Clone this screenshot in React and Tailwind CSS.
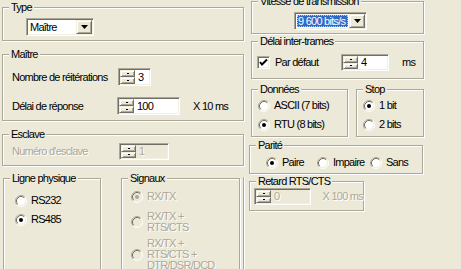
import React from 'react'

const sunken =
  'border border-t-[#ACA899] border-l-[#ACA899] border-b-white border-r-white shadow-[inset_1px_1px_0_#716F64,inset_-1px_-1px_0_#F1EFE2]'
const raised =
  'border border-t-[#F1EFE2] border-l-[#F1EFE2] border-b-[#716F64] border-r-[#716F64] shadow-[inset_1px_1px_0_#fff,inset_-1px_-1px_0_#ACA899] bg-[#ECE9D8]'
const grayText = 'text-[#ACA899] [text-shadow:1px_1px_0_#fff]'

function Group({ label, className = '', children }) {
  return (
    <div className={`relative border border-[#ACA899] shadow-[inset_1px_1px_0_#fff,1px_1px_0_#fff] shrink-0 ${className}`}>
      <span className="absolute left-[6px] -top-[7px] bg-[#ECE9D8] px-[2px] leading-[13px] whitespace-nowrap">
        {label}
      </span>
      {children}
    </div>
  )
}

function Combo({ value, className = '', selected }) {
  return (
    <div className={`flex p-[1px] bg-white ${sunken} ${className}`}>
      <div className="flex flex-1 items-center pl-[1px]">
        {selected ? (
          <span className="bg-[#316AC5] text-white outline outline-1 outline-dotted outline-[#E8C860] -outline-offset-1 pl-[1px] pr-[3px] leading-[12px]">
            {value}
          </span>
        ) : (
          <span className="pl-[1px]">{value}</span>
        )}
      </div>
      <div className={`flex w-[16px] items-center justify-center ${raised}`}>
        <svg width="7" height="4" viewBox="0 0 7 4">
          <path d="M0 0h7L3.5 4z" fill="#000" />
        </svg>
      </div>
    </div>
  )
}

function SpinBtn() {
  return (
    <div className={`flex flex-1 items-center justify-center ${raised}`}>
      <span className="h-[1px] w-[2px] bg-black" />
    </div>
  )
}

function Spin({ value, className = '', disabled }) {
  return (
    <div className={`flex p-[1px] ${disabled ? 'bg-[#ECE9D8]' : 'bg-white'} ${sunken} ${className}`}>
      <div className="flex w-[15px] flex-col">
        <SpinBtn />
        <SpinBtn />
      </div>
      <span className={`flex items-center pl-[3px] ${disabled ? grayText : ''}`}>{value}</span>
    </div>
  )
}

function Radio({ checked, disabled }) {
  return (
    <svg width="12" height="12" viewBox="0 0 12 12" className="shrink-0">
      <circle cx="6" cy="6" r="4.5" fill={disabled ? '#ECE9D8' : '#fff'} />
      <path d="M2.11 9.89A5.5 5.5 0 0 1 9.89 2.11" stroke="#ACA899" fill="none" />
      <path d="M9.89 2.11A5.5 5.5 0 0 1 2.11 9.89" stroke="#fff" fill="none" />
      <path d="M2.82 9.18A4.5 4.5 0 0 1 9.18 2.82" stroke="#716F64" fill="none" />
      <path d="M9.18 2.82A4.5 4.5 0 0 1 2.82 9.18" stroke="#F1EFE2" fill="none" />
      {checked && <circle cx="6" cy="6" r="2" fill={disabled ? '#ACA899' : '#000'} />}
    </svg>
  )
}

function Option({ label, checked, disabled, className = '' }) {
  return (
    <div className={`flex items-center gap-[4px] ${className}`}>
      <Radio checked={checked} disabled={disabled} />
      <span className={`whitespace-nowrap ${disabled ? grayText : ''}`}>{label}</span>
    </div>
  )
}

export default function App() {
  return (
    <div className="flex h-[269px] w-[461px] items-start overflow-hidden bg-[#ECE9D8] font-['Liberation_Sans',Arial,sans-serif] text-[11px] leading-[13px] tracking-[-0.75px] text-black">
      {/* left column */}
      <div className="ml-[2px] flex w-[242px] shrink-0 flex-col">
        <Group label="Type" className="mt-[7px] h-[34px] pl-[23px] pt-[10px]">
          <Combo value="Maître" className="h-[18px] w-[68px]" />
        </Group>

        <Group label="Maître" className="mt-[13px] h-[67px] pl-[9px] pt-[13px]">
          <div className="flex items-center">
            <span className="w-[106px]">Nombre de réitérations</span>
            <Spin value="3" className="h-[18px] w-[33px]" />
          </div>
          <div className="mt-[11px] flex items-center">
            <span className="w-[105px]">Délai de réponse</span>
            <Spin value="100" className="h-[18px] w-[63px]" />
            <span className="ml-[13px]">X 10 ms</span>
          </div>
        </Group>

        <Group label="Esclave" className="mt-[13px] h-[32px] pl-[9px] pt-[8px]">
          <div className="flex items-center">
            <span className={`w-[107px] ${grayText}`}>Numéro d'esclave</span>
            <Spin value="1" disabled className="h-[17px] w-[50px]" />
          </div>
        </Group>

        <div className="mt-[12px] flex h-[120px]">
          <Group label="Ligne physique" className="ml-[1px] h-[120px] w-[98px] pl-[11px] pt-[15px]">
            <Option label="RS232" className="h-[13px]" />
            <Option label="RS485" checked className="mt-[6px] h-[13px]" />
          </Group>
          <Group label="Signaux" className="ml-[20px] h-[120px] w-[119px] pl-[9px] pt-[11px]">
            <Option label="RX/TX" checked disabled className="h-[13px]" />
            <Option
              label={<span className="block leading-[11px]">RX/TX +<br />RTS/CTS</span>}
              disabled
              className="mt-[8px]"
            />
            <Option
              label={<span className="block leading-[11px]">RX/TX +<br />RTS/CTS +<br />DTR/DSR/DCD</span>}
              disabled
              className="mt-[5px]"
            />
          </Group>
          {/* edge of the next frame */}
          <div className="-mt-[1px] ml-[3px] h-[121px] w-[1px] shrink-0 bg-[#ACA899] shadow-[1px_0_0_#fff]" />
        </div>
      </div>

      {/* right column */}
      <div className="ml-[7px] flex w-[173px] shrink-0 flex-col">
        <Group label="Vitesse de transmission" className="mt-[1px] h-[33px] pl-[42px] pt-[10px]">
          <Combo value="9 600 bits/s" selected className="h-[18px] w-[73px]" />
        </Group>

        <Group label="Délai inter-trames" className="mt-[7px] h-[38px] pl-[5px] pt-[12px]">
          <div className="flex h-[17px] items-center">
            <div className={`flex h-[13px] w-[13px] shrink-0 items-center justify-center bg-white ${sunken}`}>
              <svg width="9" height="9" viewBox="0 0 9 9">
                <path d="M1 4l2 2.5L8 1.5" stroke="#000" strokeWidth="2" fill="none" />
              </svg>
            </div>
            <span className="ml-[5px] w-[66px]">Par défaut</span>
            <Spin value="4" className="h-[17px] w-[48px]" />
            <span className="ml-[13px]">ms</span>
          </div>
        </Group>

        <div className="mt-[10px] flex">
          <Group label="Données" className="h-[48px] w-[97px] pl-[6px] pt-[9px]">
            <Option label="ASCII (7 bits)" className="h-[13px]" />
            <Option label="RTU (8 bits)" checked className="mt-[6px] h-[13px]" />
          </Group>
          <Group label="Stop" className="ml-[8px] h-[48px] w-[68px] pl-[6px] pt-[9px]">
            <Option label="1 bit" checked className="h-[13px]" />
            <Option label="2 bits" className="mt-[6px] h-[13px]" />
          </Group>
        </div>

        <Group label="Parité" className="-ml-[2px] mt-[8px] h-[29px] w-[174px] pl-[16px] pt-[10px]">
          <div className="flex h-[13px] items-center">
            <Option label="Paire" checked className="w-[51px]" />
            <Option label="Impaire" className="w-[53px]" />
            <Option label="Sans" />
          </div>
        </Group>

        <Group label="Retard RTS/CTS" className="-ml-[2px] mt-[7px] h-[30px] w-[115px] pl-[4px] pt-[6px]">
          <div className="flex items-center">
            <Spin value="0" disabled className="h-[17px] w-[57px]" />
            <span className={`ml-[12px] whitespace-nowrap ${grayText}`}>X 100 ms</span>
          </div>
        </Group>
      </div>
    </div>
  )
}
